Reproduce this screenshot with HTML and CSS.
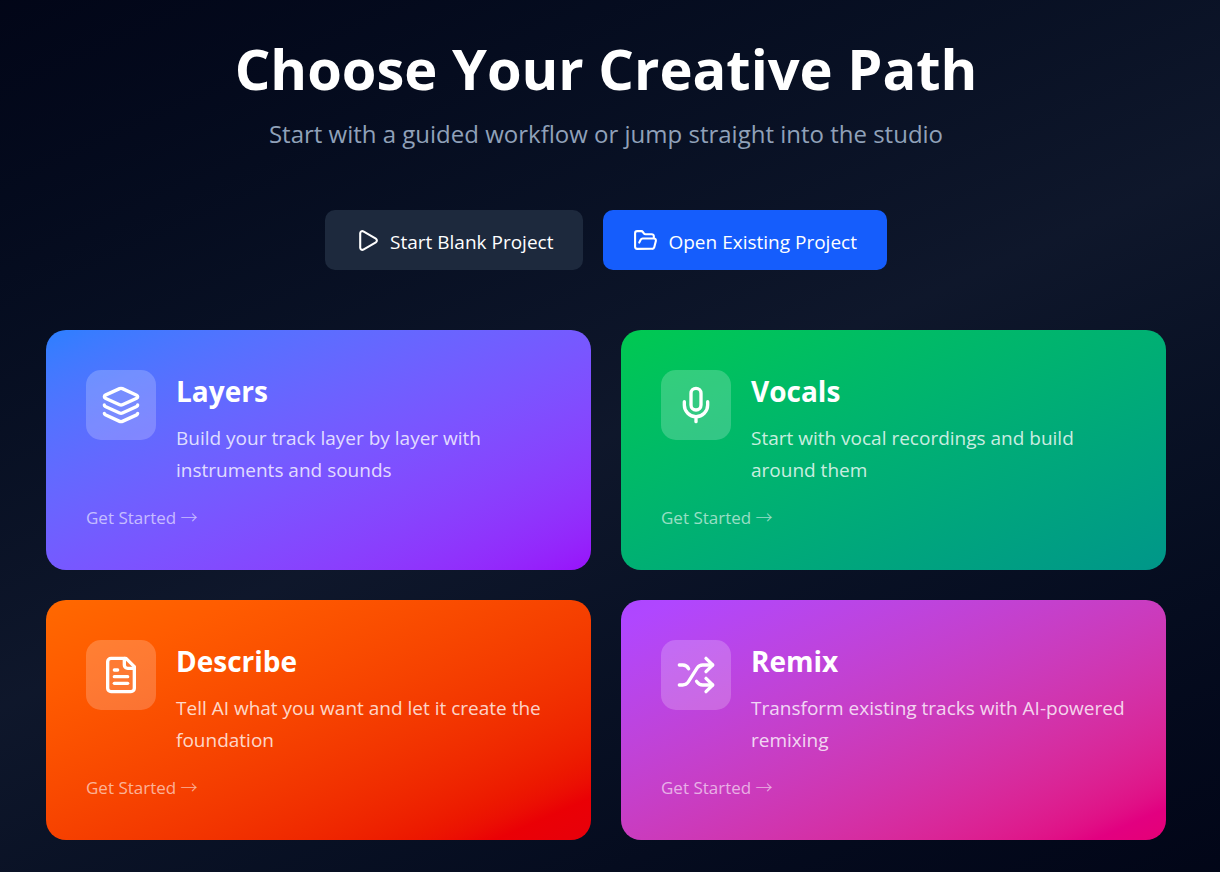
FILE: index.html
```html
<!DOCTYPE html>
<html lang="en">
<head>
<meta charset="utf-8">
<meta name="viewport" content="width=device-width, initial-scale=1">
<title>Choose Your Creative Path</title>
<link rel="stylesheet" href="styles.css">
</head>
<body>
<main class="page">
  <header class="intro">
    <h1 class="title">Choose Your Creative Path</h1>
    <p class="subtitle">Start with a guided workflow or jump straight into the studio</p>
  </header>
  <div class="actions">
    <button class="button button-blank" type="button">
      <svg class="icon" viewBox="0 0 24 24" aria-hidden="true"><path d="M5 5a2 2 0 0 1 3.008-1.728l11.997 6.998a2 2 0 0 1 .003 3.458l-12 7A2 2 0 0 1 5 19z"/></svg>
      <span class="button-label">Start Blank Project</span>
    </button>
    <button class="button button-open" type="button">
      <svg class="icon" viewBox="0 0 24 24" aria-hidden="true"><path d="m6 14 1.5-2.9A2 2 0 0 1 9.24 10H20a2 2 0 0 1 1.94 2.5l-1.54 6a2 2 0 0 1-1.95 1.5H4a2 2 0 0 1-2-2V5a2 2 0 0 1 2-2h3.9a2 2 0 0 1 1.69.9l.81 1.2a2 2 0 0 0 1.67.9H18a2 2 0 0 1 2 2v2"/></svg>
      <span class="button-label">Open Existing Project</span>
    </button>
  </div>
  <section class="paths" aria-label="Guided workflows">
    <button class="card card-layers" type="button">
      <span class="card-body">
        <span class="badge"><svg class="icon icon-large" viewBox="0 0 24 24" aria-hidden="true"><path d="M12.83 2.18a2 2 0 0 0-1.66 0L2.6 6.08a1 1 0 0 0 0 1.83l8.58 3.91a2 2 0 0 0 1.66 0l8.58-3.9a1 1 0 0 0 0-1.83z"/><path d="M2 12a1 1 0 0 0 .58.91l8.6 3.91a2 2 0 0 0 1.65 0l8.58-3.9A1 1 0 0 0 22 12"/><path d="M2 17a1 1 0 0 0 .58.91l8.6 3.91a2 2 0 0 0 1.65 0l8.58-3.9A1 1 0 0 0 22 17"/></svg></span>
        <span class="card-text">
          <span class="card-title">Layers</span>
          <span class="card-copy">Build your track layer by layer with instruments and sounds</span>
        </span>
      </span>
      <span class="card-link">Get Started <span class="arrow">→</span></span>
    </button>
    <button class="card card-vocals" type="button">
      <span class="card-body">
        <span class="badge"><svg class="icon icon-large" viewBox="0 0 24 24" aria-hidden="true"><path d="M12 19v3"/><path d="M19 10v2a7 7 0 0 1-14 0v-2"/><rect x="9" y="2" width="6" height="13" rx="3"/></svg></span>
        <span class="card-text">
          <span class="card-title">Vocals</span>
          <span class="card-copy">Start with vocal recordings and build around them</span>
        </span>
      </span>
      <span class="card-link">Get Started <span class="arrow">→</span></span>
    </button>
    <button class="card card-describe" type="button">
      <span class="card-body">
        <span class="badge"><svg class="icon icon-large" viewBox="0 0 24 24" aria-hidden="true"><path d="M15 2H6a2 2 0 0 0-2 2v16a2 2 0 0 0 2 2h12a2 2 0 0 0 2-2V7Z"/><path d="M14 2v4a2 2 0 0 0 2 2h4"/><path d="M10 9H8"/><path d="M16 13H8"/><path d="M16 17H8"/></svg></span>
        <span class="card-text">
          <span class="card-title">Describe</span>
          <span class="card-copy">Tell AI what you want and let it create the foundation</span>
        </span>
      </span>
      <span class="card-link">Get Started <span class="arrow">→</span></span>
    </button>
    <button class="card card-remix" type="button">
      <span class="card-body">
        <span class="badge"><svg class="icon icon-large" viewBox="0 0 24 24" aria-hidden="true"><path d="m18 14 4 4-4 4"/><path d="m18 2 4 4-4 4"/><path d="M2 18h1.973a4 4 0 0 0 3.3-1.7l5.454-8.6a4 4 0 0 1 3.3-1.7H22"/><path d="M2 6h1.972a4 4 0 0 1 3.6 2.2"/><path d="M22 18h-6.041a4 4 0 0 1-3.3-1.8l-.359-.45"/></svg></span>
        <span class="card-text">
          <span class="card-title">Remix</span>
          <span class="card-copy">Transform existing tracks with AI-powered remixing</span>
        </span>
      </span>
      <span class="card-link">Get Started <span class="arrow">→</span></span>
    </button>
  </section>
</main>
</body>
</html>
```
FILE: styles.css
```css
*,
*::before,
*::after {
  box-sizing: border-box;
}

body {
  margin: 0;
  background: #020618;
  color: #fff;
  font-family: "Open Sans", "Noto Sans", sans-serif;
}

.page {
  min-height: 100vh;
  padding: 28px 54px 30px 46px;
  background: linear-gradient(156deg in oklab, oklch(12.9% 0.042 264.695), oklch(20.8% 0.042 265.755) 50%, oklch(12.9% 0.042 264.695));
}

.intro {
  text-align: center;
}

.title {
  margin: 0;
  font-size: 56px;
  font-weight: 700;
  line-height: 80px;
}

.subtitle {
  margin: 6px 0 0;
  color: #90a1b9;
  font-size: 24px;
  line-height: 40px;
}

.actions {
  display: flex;
  flex-wrap: wrap;
  justify-content: center;
  gap: 20px;
  margin: 56px 0 60px;
}

.button {
  display: flex;
  align-items: center;
  gap: 10px;
  height: 60px;
  padding: 0 30px;
  border: 0;
  border-radius: 10px;
  color: #fff;
  font-family: inherit;
  font-size: 19px;
  line-height: 30px;
  cursor: pointer;
}

.button-label {
  padding-top: 4px;
}

.button-blank {
  background: #1d293d;
}

.button-open {
  background: #155dfc;
}

.icon {
  flex: none;
  width: 25px;
  height: 25px;
  fill: none;
  stroke: currentColor;
  stroke-width: 2;
  stroke-linecap: round;
  stroke-linejoin: round;
}

.icon-large {
  width: 40px;
  height: 40px;
}

.paths {
  display: grid;
  grid-template-columns: repeat(2, minmax(0, 1fr));
  gap: 30px;
}

.card {
  display: flex;
  flex-direction: column;
  gap: 18px;
  padding: 40px 40px 38px;
  border: 0;
  border-radius: 20px;
  color: #fff;
  font-family: inherit;
  text-align: left;
  cursor: pointer;
}

.card-layers {
  background: linear-gradient(to bottom right in oklab, oklch(62.3% 0.214 259.815), oklch(55.8% 0.288 302.321));
}

.card-vocals {
  background: linear-gradient(to bottom right in oklab, oklch(72.3% 0.219 149.579), oklch(60% 0.118 184.704));
}

.card-describe {
  background: linear-gradient(to bottom right in oklab, oklch(70.5% 0.213 47.604), oklch(57.7% 0.245 27.325));
}

.card-remix {
  background: linear-gradient(to bottom right in oklab, oklch(62.7% 0.265 303.9), oklch(59.2% 0.249 0.584));
}

.card-body {
  display: flex;
  align-items: flex-start;
  gap: 20px;
}

.badge {
  display: flex;
  flex: none;
  padding: 15px;
  border-radius: 15px;
  background: rgb(255 255 255 / 20%);
}

.card-text {
  display: flex;
  flex-direction: column;
  gap: 10px;
}

.card-title {
  font-size: 28px;
  font-weight: 700;
  line-height: 42px;
}

.card-copy {
  color: rgb(255 255 255 / 80%);
  font-size: 19px;
  line-height: 32px;
}

.card-link {
  color: rgb(255 255 255 / 60%);
  font-size: 17px;
  line-height: 28px;
}

.arrow {
  font-family: "Noto Sans CJK JP", sans-serif;
  font-weight: 300;
  line-height: 1;
}
```
